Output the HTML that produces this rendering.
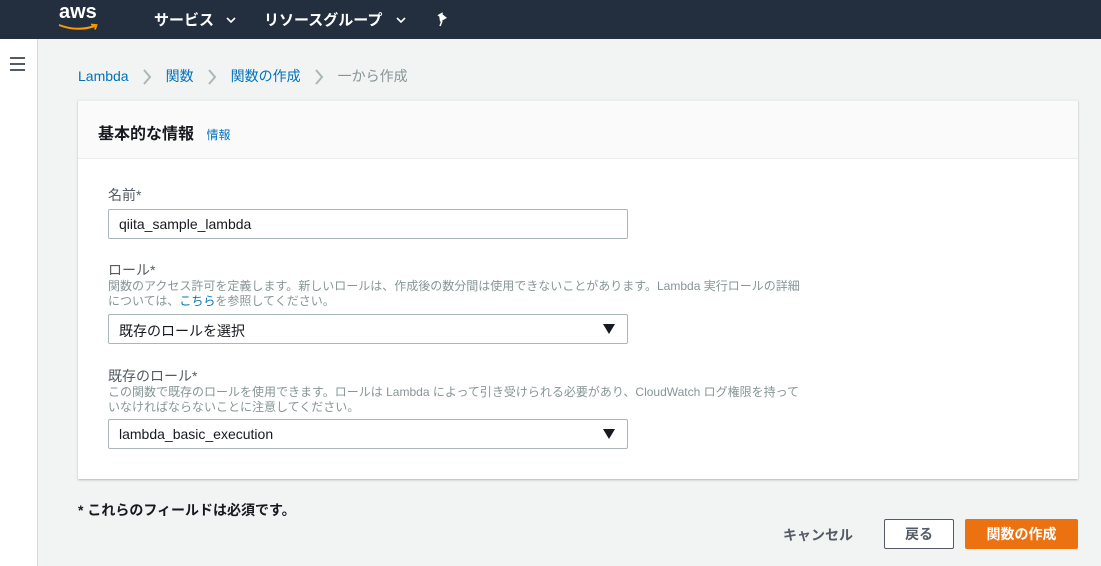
<!DOCTYPE html>
<html><head><meta charset="utf-8"><style>
*{margin:0;padding:0;box-sizing:border-box}
body{width:1101px;height:566px;overflow:hidden;background:#f2f3f3;font-family:"Liberation Sans","Noto Sans CJK JP",sans-serif;position:relative;color:#16191f}
.top{position:absolute;left:0;top:0;width:1101px;height:39px;background:#232f3e;color:#fff}
.side{position:absolute;left:0;top:39px;width:38px;height:527px;background:#fff;border-right:1px solid #d5dbdb}
.abs{position:absolute;white-space:nowrap}
.card{position:absolute;left:78px;top:100px;width:1000px;height:379px;background:#fff;box-shadow:0 1px 2px rgba(0,0,0,.25);border-top:1px solid #eaeded}
.hd{height:58px;background:#fafafa;border-bottom:1px solid #eaeded}
.inp{position:absolute;left:108px;width:520px;height:30px;border:1px solid #aab7b8;border-radius:2px;background:#fff;font-size:14px;padding:6px 10px}
.lbl{font-size:14px;color:#545b64}
.desc{font-size:12px;color:#879596;line-height:15px}
.arr{position:absolute;right:12px;top:9px}
.sep{display:inline-block;margin:0 14px 0 13px;vertical-align:middle}
</style></head><body>
<div class="top">
 <div class="abs" style="left:59px;top:1px;font-size:20px;font-weight:bold;letter-spacing:0px">aws</div>
 <svg class="abs" style="left:57px;top:23px" width="44" height="10"><path d="M2 2 Q20 9 38 3" stroke="#f90" stroke-width="2" fill="none"/><path d="M34 1.5 L39.5 2 L38 6.5" stroke="#f90" stroke-width="1.8" fill="none"/></svg>
 <div class="abs" style="left:154px;top:9px;font-size:15px;font-weight:bold">サービス</div>
 <svg class="abs" style="left:226px;top:17px" width="10" height="6"><path d="M1 1 L5 5 L9 1" stroke="#fff" stroke-width="1.6" fill="none"/></svg>
 <div class="abs" style="left:264px;top:9px;font-size:15px;font-weight:bold">リソースグループ</div>
 <svg class="abs" style="left:396px;top:17px" width="10" height="6"><path d="M1 1 L5 5 L9 1" stroke="#fff" stroke-width="1.6" fill="none"/></svg>
 <svg class="abs" style="left:436px;top:12px" width="14" height="15"><path d="M4 1 L10 1 L9 3 L11 8 L3 8 L5 3 Z" fill="#fff" transform="rotate(-30 7 7)"/><path d="M6 9 L4 14" stroke="#fff" stroke-width="1.5"/></svg>
</div>
<div class="side"><div class="abs" style="left:10px;top:18px;width:15px">
<div style="height:2px;background:#545b64;margin-bottom:4px"></div><div style="height:2px;background:#545b64;margin-bottom:4px"></div><div style="height:2px;background:#545b64"></div></div></div>
<div class="abs" style="left:78px;top:66px;font-size:14px;color:#0073bb">Lambda<svg class="sep" width="10" height="16"><path d="M2 1 L8 8 L2 15" stroke="#aab7b8" stroke-width="2" fill="none"/></svg>関数<svg class="sep" width="10" height="16"><path d="M2 1 L8 8 L2 15" stroke="#aab7b8" stroke-width="2" fill="none"/></svg>関数の作成<svg class="sep" width="10" height="16"><path d="M2 1 L8 8 L2 15" stroke="#aab7b8" stroke-width="2" fill="none"/></svg><span style="color:#879596">一から作成</span></div>
<div class="card"><div class="hd"><div class="abs" style="left:20px;top:19px;font-size:16px;font-weight:bold">基本的な情報 <span style="font-size:12px;font-weight:normal;color:#0073bb;margin-left:8px">情報</span></div></div></div>
<div class="abs lbl" style="left:108px;top:185px">名前*</div>
<div class="inp" style="top:209px">qiita_sample_lambda</div>
<div class="abs lbl" style="left:108px;top:260px">ロール*</div>
<div class="abs desc" style="left:108px;top:279px">関数のアクセス許可を定義します。新しいロールは、作成後の数分間は使用できないことがあります。Lambda 実行ロールの詳細<br>については、<span style="color:#0073bb">こちら</span>を参照してください。</div>
<div class="inp" style="top:314px">既存のロールを選択<svg class="arr" width="12" height="10"><path d="M0 0 L12 0 L6 10 Z" fill="#16191f"/></svg></div>
<div class="abs lbl" style="left:108px;top:366px">既存のロール*</div>
<div class="abs desc" style="left:108px;top:385px">この関数で既存のロールを使用できます。ロールは Lambda によって引き受けられる必要があり、CloudWatch ログ権限を持って<br>いなければならないことに注意してください。</div>
<div class="inp" style="top:419px">lambda_basic_execution<svg class="arr" width="12" height="10"><path d="M0 0 L12 0 L6 10 Z" fill="#16191f"/></svg></div>
<div class="abs" style="left:78px;top:500px;font-size:14px;font-weight:bold">* これらのフィールドは必須です。</div>
<div class="abs" style="left:783px;top:525px;font-size:14px;font-weight:bold;color:#545b64">キャンセル</div>
<div class="abs" style="left:884px;top:519px;width:70px;height:30px;border:1px solid #545b64;border-radius:2px;background:#fff;font-size:14px;font-weight:bold;color:#545b64;text-align:center;line-height:28px">戻る</div>
<div class="abs" style="left:965px;top:519px;width:113px;height:30px;background:#ec7211;border-radius:2px;font-size:14px;font-weight:bold;color:#fff;text-align:center;line-height:30px">関数の作成</div>
</body></html>
